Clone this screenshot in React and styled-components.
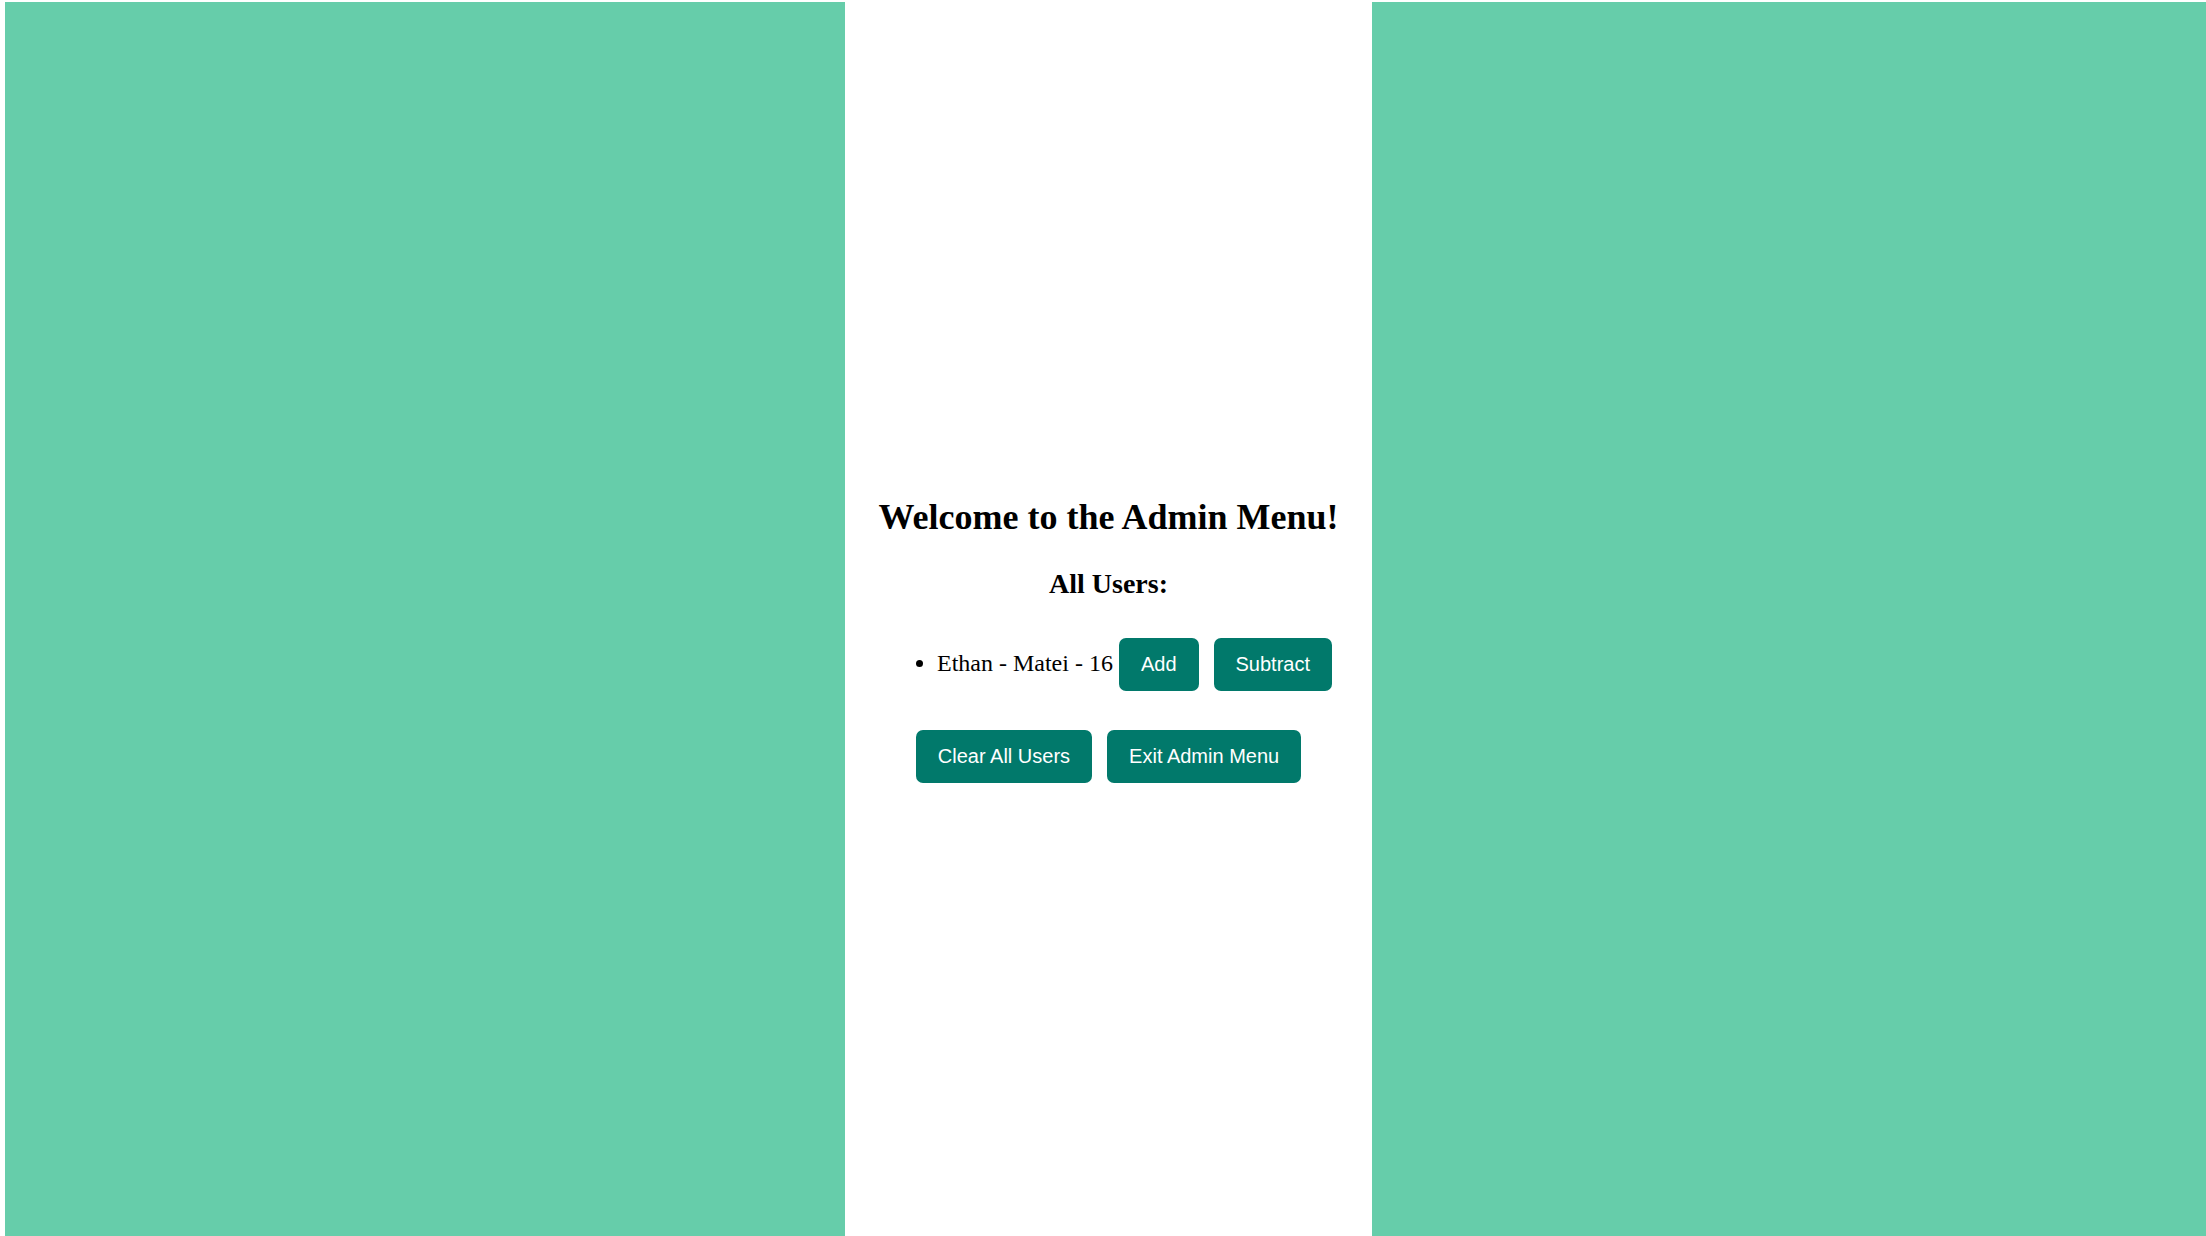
import React, { useState } from "react";
import styled, { createGlobalStyle } from "styled-components";

const colors = {
  side: "#66cdaa",
  button: "#01796b",
  text: "#000000",
};

const GlobalStyle = createGlobalStyle`
  html, body {
    margin: 0;
    padding: 0;
    background: #ffffff;
    overflow: hidden;
  }
  body {
    font-family: "Liberation Serif", "Times New Roman", serif;
  }
`;

const Page = styled.div`
  display: grid;
  grid-template-columns: 840px 527px 1fr;
  height: 1236px;
  padding: 2px 0 0 5px;
  box-sizing: border-box;
`;

const SidePanel = styled.div`
  background-color: ${colors.side};
`;

const Center = styled.main`
  display: flex;
  flex-direction: column;
  align-items: center;
  justify-content: center;
  padding-top: 40px;
  color: ${colors.text};
`;

const Heading = styled.h1`
  font-size: 36px;
  font-weight: 700;
  margin: 0 0 30px;
`;

const SubHeading = styled.h2`
  font-size: 28px;
  font-weight: 700;
  margin: 0 0 38px;
`;

const UserList = styled.ul`
  margin: 0 8px 39px 0;
  padding-left: 60px;
`;

const UserItem = styled.li`
  font-size: 24px;
`;

const Button = styled.button`
  background-color: ${colors.button};
  color: #ffffff;
  border: none;
  border-radius: 7px;
  padding: 15px 22px;
  font-family: "Liberation Sans", Arial, sans-serif;
  font-size: 20px;
  line-height: 23px;
  cursor: pointer;
  margin-left: ${(p) => (p.$gap ? "15px" : "0")};
`;

const ButtonRow = styled.div`
  display: flex;
  gap: 15px;
`;

const App = () => {
  const [users, setUsers] = useState([{ id: 1, first: "Ethan", last: "Matei", score: 16 }]);

  const change = (id, delta) =>
    setUsers((list) => list.map((u) => (u.id === id ? { ...u, score: u.score + delta } : u)));

  return (
    <>
      <GlobalStyle />
      <Page>
        <SidePanel />
        <Center>
          <Heading>Welcome to the Admin Menu!</Heading>
          <SubHeading>All Users:</SubHeading>
          <UserList>
            {users.map((u) => (
              <UserItem key={u.id}>
                {u.first} - {u.last} - {u.score}{" "}
                <Button onClick={() => change(u.id, 1)}>Add</Button>
                <Button $gap onClick={() => change(u.id, -1)}>Subtract</Button>
              </UserItem>
            ))}
          </UserList>
          <ButtonRow>
            <Button onClick={() => setUsers([])}>Clear All Users</Button>
            <Button>Exit Admin Menu</Button>
          </ButtonRow>
        </Center>
        <SidePanel />
      </Page>
    </>
  );
};

export default App;
